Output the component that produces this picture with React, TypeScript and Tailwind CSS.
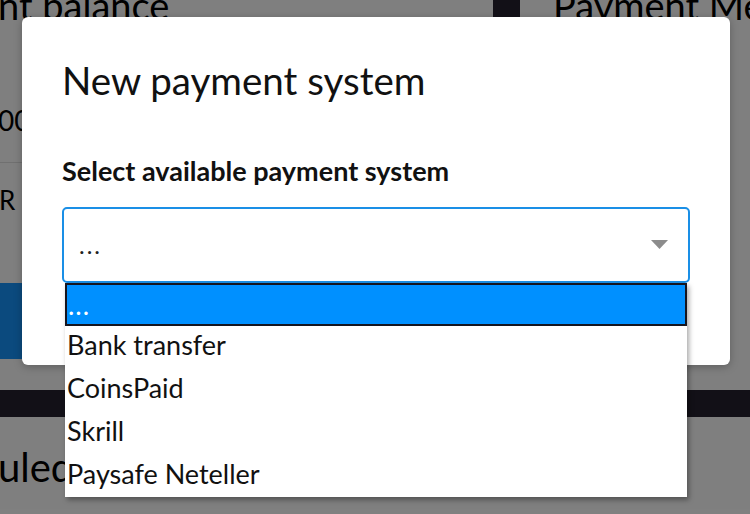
import React from "react";

const font = { fontFamily: "Lato, 'Open Sans', sans-serif" };

export default function App() {
  const options = ["Bank transfer", "CoinsPaid", "Skrill", "Paysafe Neteller"];
  return (
    <div className="relative w-[750px] h-[514px] overflow-hidden bg-[#24202f] text-black" style={font}>
      {/* underlying page */}
      <div className="flex flex-col">
        <div className="flex gap-[27px] h-[390px]">
          <div className="w-[493px] shrink-0 overflow-hidden bg-white flex flex-col">
            <div className="text-[38px] leading-[38px] mt-[-14px] ml-[-2px] whitespace-nowrap">nt balance</div>
            <div className="mt-[80px] text-[28px] leading-[32px] ml-[-2px]">00</div>
            <div className="mt-[26px] h-px bg-[#e0e0e0]" />
            <div className="mt-[22px] text-[26px] leading-[30px] ml-[-1px]">R</div>
            <div className="mt-[68px] h-[76px] bg-[#1694fc]" />
          </div>
          <div className="flex-1 min-w-0 overflow-hidden bg-white relative">
            <div className="text-[38px] leading-[38px] mt-[-14px] ml-[33px] whitespace-nowrap">Payment Methods</div>
          </div>
        </div>
        <div className="mt-[27px] h-[200px] bg-white">
          <div className="mt-[26px] text-[40px] leading-[48px] ml-[-2px] whitespace-nowrap">uled payouts</div>
        </div>
      </div>

      {/* overlay */}
      <div className="absolute inset-0 bg-black/50" />

      {/* modal */}
      <div className="absolute left-[22px] top-[17px] w-[708px] h-[348px] bg-white rounded-[6px] shadow-[0_2px_8px_rgba(0,0,0,0.25)] px-[40px] pt-[40px] flex flex-col">
        <div className="text-[38.5px] leading-[46px] font-normal text-[#111] whitespace-nowrap">New payment system</div>
        <div className="mt-[52px] text-[27px] leading-[32px] font-bold text-[#111] whitespace-nowrap">Select available payment system</div>
        <div className="mt-[20px] h-[76px] shrink-0 border-2 border-[#1a8fe6] rounded-[5px] flex items-center justify-between pl-[15px] pr-[20px]">
          <span className="text-[24px] tracking-[2px] text-[#222]">...</span>
          <svg width="17" height="10" viewBox="0 0 17 10"><path d="M0 0 H17 L8.5 9 Z" fill="#8c8c8c" /></svg>
        </div>
      </div>

      {/* native dropdown list */}
      <div className="absolute left-[65px] top-[283px] w-[622px] h-[214px] bg-white shadow-[2px_3px_5px_rgba(0,0,0,0.35)] flex flex-col">
        <div className="h-[43px] shrink-0 bg-[#0090ff] border-2 border-[#15151f] text-white text-[27px] leading-[39px] pl-[1px] tracking-[1px]">...</div>
        {options.map((o) => (
          <div key={o} className="h-[43px] shrink-0 text-[27px] leading-[37px] pl-[2px] text-[#111] whitespace-nowrap">{o}</div>
        ))}
      </div>
    </div>
  );
}
